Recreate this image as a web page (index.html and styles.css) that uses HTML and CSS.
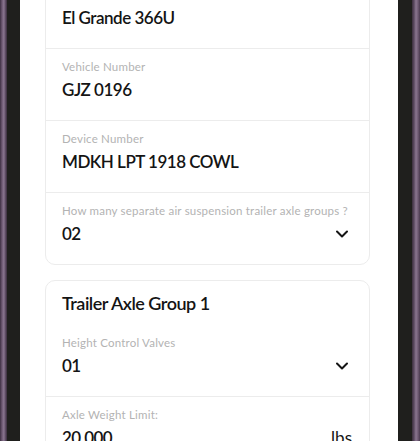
FILE: index.html
```html
<!DOCTYPE html>
<html lang="en">

<head>
    <meta charset="UTF-8">
    <meta name="viewport" content="width=device-width, initial-scale=1.0">
    <title>Trailer Details</title>
    <link rel="stylesheet" href="styles.css">
</head>

<body>
    <div class="dispositivo">
        <div class="borde borde-izq"></div>
        <div class="bisel"></div>

        <div class="pantalla">
            <div class="tarjeta tarjeta-primera">
                <div class="campo">
                    <span class="etiqueta">Model Name</span>
                    <div class="valor">El Grande 366U</div>
                </div>

                <div class="campo">
                    <span class="etiqueta">Vehicle Number</span>
                    <div class="valor">GJZ 0196</div>
                </div>

                <div class="campo">
                    <span class="etiqueta">Device Number</span>
                    <div class="valor">MDKH LPT 1918 COWL</div>
                </div>

                <div class="campo">
                    <span class="etiqueta">How many separate air suspension trailer axle groups ?</span>
                    <div class="valor valor-select">
                        <span>02</span>
                        <svg class="flecha" width="12" height="8" viewBox="0 0 12 8">
                            <polyline points="1,1.5 6,6.5 11,1.5" fill="none" stroke="#151515" stroke-width="2" stroke-linecap="round" stroke-linejoin="round" />
                        </svg>
                    </div>
                </div>
            </div>

            <div class="tarjeta">
                <h2 class="titulo-tarjeta">Trailer Axle Group 1</h2>

                <div class="campo">
                    <span class="etiqueta">Height Control Valves</span>
                    <div class="valor valor-select">
                        <span>01</span>
                        <svg class="flecha" width="12" height="8" viewBox="0 0 12 8">
                            <polyline points="1,1.5 6,6.5 11,1.5" fill="none" stroke="#151515" stroke-width="2" stroke-linecap="round" stroke-linejoin="round" />
                        </svg>
                    </div>
                </div>

                <div class="campo">
                    <span class="etiqueta">Axle Weight Limit:</span>
                    <div class="valor valor-select">
                        <span>20,000</span>
                        <span class="unidad">lbs</span>
                    </div>
                </div>
            </div>
        </div>

        <div class="bisel bisel-der"></div>
        <div class="borde borde-der"></div>
    </div>
</body>

</html>
```

FILE: styles.css
```css
body {
    font-family: Lato, "Open Sans", sans-serif;
    margin: 0;
    padding: 0;
    background-color: #1f1f1d;
}

.dispositivo {
    display: flex;
    height: 441px;
    overflow: hidden;
}

.borde {
    width: 7px;
    background: linear-gradient(to right, #3d2f42, #6f5b74 30%, #8a7690 55%, #5b4a60 80%, #3a2e3d);
}

.borde-der {
    width: 8px;
    background: linear-gradient(to right, #3a2e3d, #5b4a60 25%, #8a7690 50%, #6f5b74 75%, #4a3a4f);
}

.bisel {
    width: 13px;
    background-color: #1f1f1d;
}

.bisel-der {
    width: 14px;
}

.pantalla {
    flex: 1;
    background-color: #ffffff;
    padding: 0 28px 0 25px;
    overflow: hidden;
}

.tarjeta {
    background-color: #ffffff;
    border: 1px solid #ececec;
    border-radius: 10px;
    margin-bottom: 15px;
}

.tarjeta-primera {
    margin-top: -24px;
}

.titulo-tarjeta {
    margin: 0;
    padding: 10px 17px 10px 16px;
    font-size: 18px;
    line-height: 24px;
    font-weight: 600;
    color: #141414;
    letter-spacing: -0.5px;
}

.campo {
    padding: 10px 17px 19px 16px;
    border-bottom: 1px solid #ececec;
}

.campo:last-child {
    border-bottom: none;
}

.etiqueta {
    display: block;
    font-size: 11.5px;
    line-height: 16px;
    color: #b3b3b3;
    letter-spacing: 0.2px;
}

.valor {
    margin-top: 4px;
    font-size: 17px;
    line-height: 22px;
    font-weight: 600;
    color: #141414;
    letter-spacing: -0.5px;
}

.valor-select {
    display: flex;
    justify-content: space-between;
    align-items: center;
}

.flecha {
    margin-right: 4px;
}

.unidad {
    font-weight: 400;
    letter-spacing: 0;
}
```
